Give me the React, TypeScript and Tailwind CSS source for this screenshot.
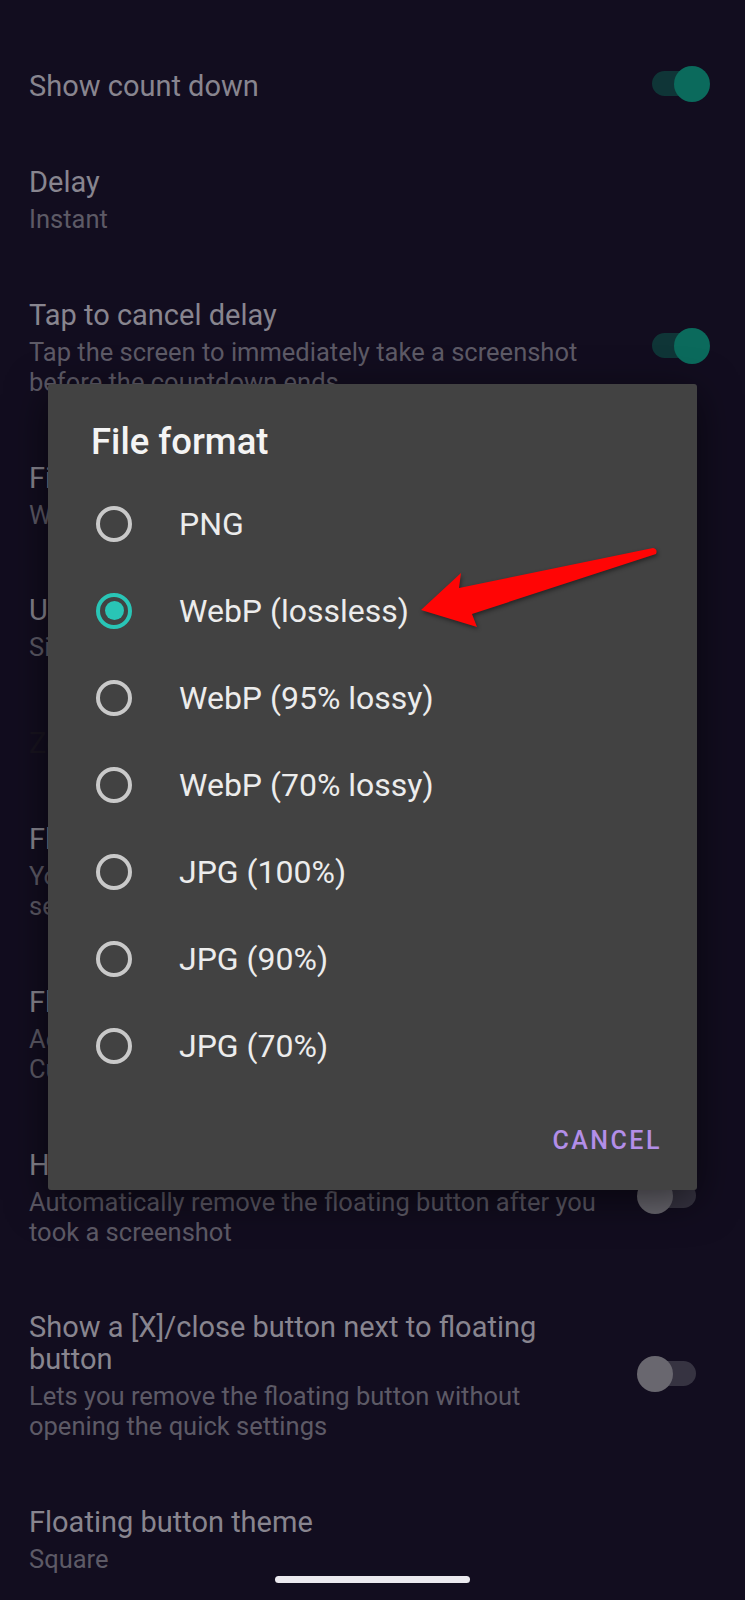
type Pref = {
  title: string;
  summary?: string[];
  toggle?: boolean;
  faint?: boolean;
};

const prefs: Pref[] = [
  { title: "Show count down", toggle: true },
  { title: "Delay", summary: ["Instant"] },
  {
    title: "Tap to cancel delay",
    summary: [
      "Tap the screen to immediately take a screenshot",
      "before the countdown ends",
    ],
    toggle: true,
  },
  { title: "File format", summary: ["WebP (lossless)"] },
  { title: "Use system screenshot", summary: ["Simulates the system screenshot button"] },
  { title: "Zoom", faint: true },
  {
    title: "Floating button",
    summary: ["You can take a screenshot with a floating button on", "settings page"],
  },
  {
    title: "Floating button accessibility",
    summary: ["Accessibility service for the floating button.", "Currently disabled"],
  },
  {
    title: "Hide floating button after screenshot",
    summary: ["Automatically remove the floating button after you", "took a screenshot"],
    toggle: false,
  },
  {
    title: "Show a [X]/close button next to floating button",
    summary: ["Lets you remove the floating button without", "opening the quick settings"],
    toggle: false,
  },
  { title: "Floating button theme", summary: ["Square"] },
];

const formats = [
  "PNG",
  "WebP (lossless)",
  "WebP (95% lossy)",
  "WebP (70% lossy)",
  "JPG (100%)",
  "JPG (90%)",
  "JPG (70%)",
];

function Toggle({ on }: { on: boolean }) {
  return (
    <div className="relative -mt-[4px] h-[36px] w-[74px] shrink-0">
      <div
        className={
          "absolute left-[15px] top-[5px] h-[25px] w-[44px] rounded-full " +
          (on ? "bg-[#0f3537]" : "bg-[#363341]")
        }
      />
      <div
        className={
          "absolute top-0 h-[36px] w-[36px] rounded-full " +
          (on ? "left-[37px] bg-[#0b6a5c]" : "left-0 bg-[#69676f]")
        }
      />
    </div>
  );
}

function Radio({ checked }: { checked: boolean }) {
  return (
    <div
      className={
        "flex h-[36px] w-[36px] shrink-0 items-center justify-center rounded-full border-[4px] " +
        (checked ? "border-[#29c5b6]" : "border-[#c9c9c9]")
      }
    >
      {checked && <div className="h-[19px] w-[19px] rounded-full bg-[#29c5b6]" />}
    </div>
  );
}

function PrefRow({ pref }: { pref: Pref }) {
  return (
    <div className="flex items-center py-[32.3px] pl-[29px] pr-[34px]">
      <div className="min-w-0 flex-1 pr-[32px]">
        <div
          className={
            "text-[29px] leading-[32px] " +
            (pref.faint ? "text-[#18141f]" : "text-[#88858f]")
          }
        >
          {pref.title}
        </div>
        {pref.summary && (
          <div className="mt-[6px] text-[25.5px] leading-[30px] text-[#5d5a66]">
            {pref.summary.map((line) => (
              <div key={line}>{line}</div>
            ))}
          </div>
        )}
      </div>
      {pref.toggle !== undefined && <Toggle on={pref.toggle} />}
    </div>
  );
}

export default function App() {
  const selected = 1;

  return (
    <div className="relative h-[1600px] w-full overflow-hidden bg-[#120d1f] font-['Roboto',sans-serif]">
      <div className="pt-[37.5px]">
        {prefs.map((p) => (
          <PrefRow key={p.title} pref={p} />
        ))}
      </div>

      {/* format picker dialog */}
      <div className="absolute left-[48px] top-[384px] flex h-[806px] w-[649px] flex-col rounded-[3px] bg-[#424242] shadow-[0_10px_40px_rgba(0,0,0,0.55)]">
        <div className="pl-[43px] pt-[38px] text-[36.5px] font-medium leading-[40px] text-[#f4f4f4]">
          File format
        </div>
        <div className="mt-[18px]">
          {formats.map((f, i) => (
            <div key={f} className="flex h-[87px] items-center pl-[48px]">
              <Radio checked={i === selected} />
              <span className="ml-[47px] text-[32px] text-[#ececec]">{f}</span>
            </div>
          ))}
        </div>
        <div className="mt-auto flex justify-end pb-[34px] pr-[35px]">
          <span className="text-[25px] font-medium leading-[30px] tracking-[0.1em] text-[#b38ee8]">
            CANCEL
          </span>
        </div>
      </div>

      {/* pointer arrow */}
      <svg
        className="absolute left-[410px] top-[540px] drop-shadow-[1px_2px_2px_rgba(0,0,0,0.45)]"
        width="260"
        height="100"
        viewBox="0 0 260 100"
      >
        <path
          d="M11 70 L51 33 L49 48 L243 8 Q248 9 246 14 L62 74 L67 87 Z"
          fill="#ff0505"
        />
      </svg>

      <div className="absolute left-[275px] top-[1576px] h-[7px] w-[195px] rounded-full bg-[#ebe9ef]" />
    </div>
  );
}
